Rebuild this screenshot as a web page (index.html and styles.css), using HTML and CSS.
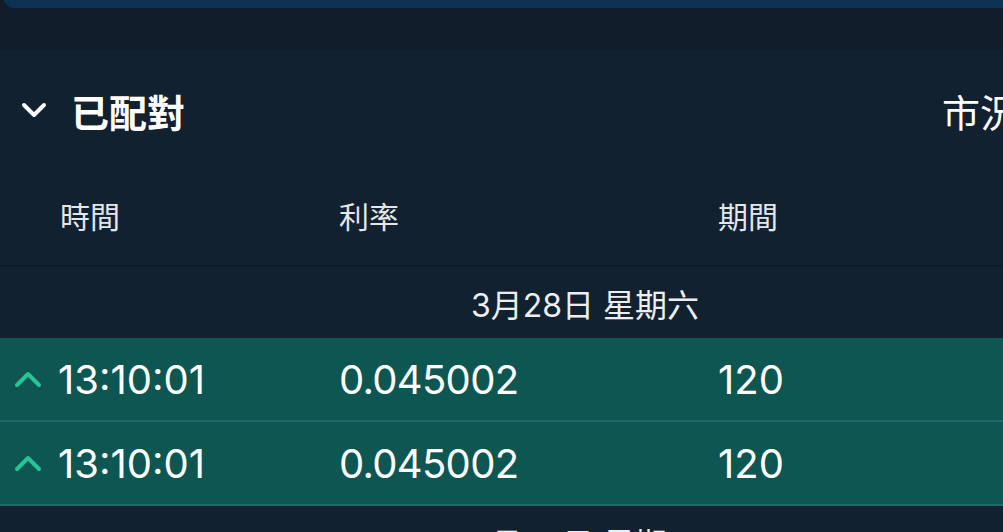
FILE: index.html
```html
<!DOCTYPE html>
<html lang="zh-Hant">
<head>
    <meta charset="UTF-8">
    <meta name="viewport" content="width=device-width, initial-scale=1.0">
    <title>已配對</title>
    <link rel="stylesheet" href="styles.css">
</head>
<body>
    <div class="page">
        <div class="top-card"></div>
        <div class="spacer"></div>
        <section class="matched">
            <header class="matched-head">
                <div class="title">
                    <svg class="chevron" width="26" height="18" viewBox="0 0 26 18">
                        <path d="M3 4 L13 14 L23 4" fill="none" stroke="#fff" stroke-width="4" stroke-linecap="round" stroke-linejoin="round"/>
                    </svg>
                    <h2>已配對</h2>
                </div>
                <div class="market">市況</div>
            </header>
            <div class="row col-head">
                <span></span>
                <span>時間</span>
                <span>利率</span>
                <span>期間</span>
            </div>
            <div class="date-row">3月28日 星期六</div>
            <div class="row trade">
                <span class="arrow">
                    <svg width="28" height="18" viewBox="0 0 28 18">
                        <path d="M3 15 L14 4 L25 15" fill="none" stroke="#27c494" stroke-width="4" stroke-linecap="round" stroke-linejoin="round"/>
                    </svg>
                </span>
                <span class="num">13:10:01</span>
                <span class="num rate">0.045002</span>
                <span class="num">120</span>
            </div>
            <div class="row trade">
                <span class="arrow">
                    <svg width="28" height="18" viewBox="0 0 28 18">
                        <path d="M3 15 L14 4 L25 15" fill="none" stroke="#27c494" stroke-width="4" stroke-linecap="round" stroke-linejoin="round"/>
                    </svg>
                </span>
                <span class="num">13:10:01</span>
                <span class="num rate">0.045002</span>
                <span class="num">120</span>
            </div>
            <div class="date-row">3月28日 星期五</div>
        </section>
    </div>
</body>
</html>
```

FILE: styles.css
```css
body {
    margin: 0;
    background: #111d2a;
    font-family: "Inter", "Noto Sans CJK TC", sans-serif;
    color: #fff;
    overflow: hidden;
}
.page {
    inline-size: 1170px;
}
.top-card {
    block-size: 24px;
    margin-block-start: -16px;
    margin-inline-start: 3px;
    border-radius: 16px;
    background: #0e3152;
}
.spacer {
    block-size: 42px;
}
.matched {
    background: #12212f;
}
.matched-head {
    display: flex;
    align-items: center;
    block-size: 120px;
}
.title {
    display: flex;
    align-items: center;
    gap: 24px;
    padding-inline-start: 21px;
}
.chevron {
    display: block;
}
h2 {
    margin: 0;
    font-family: "Noto Sans CJK TC", sans-serif;
    font-size: 38px;
    font-weight: 700;
}
.market {
    margin-inline-start: auto;
    inline-size: 228px;
    font-family: "Noto Sans CJK TC", sans-serif;
    font-size: 38px;
    font-weight: 400;
    white-space: nowrap;
}
.row {
    display: grid;
    grid-template-columns: 58px 281px 379px 1fr;
    align-items: center;
}
.col-head {
    block-size: 89px;
    padding-block-end: 6px;
    border-block-end: 2px solid #0e1a25;
    font-family: "Noto Sans CJK TC", sans-serif;
    font-size: 30px;
    color: #e3e7eb;
}
.col-head span:nth-child(2) {
    padding-inline-start: 2px;
}
.date-row {
    block-size: 71px;
    display: flex;
    align-items: center;
    justify-content: center;
    font-family: "Inter", "Noto Sans CJK TC", sans-serif;
    font-size: 32px;
    color: #eceef0;
}
.trade {
    block-size: 82px;
    background: #0e5651;
    border-block-end: 2px solid #1d6a6b;
}
.arrow {
    padding-inline-start: 14px;
    display: flex;
}
.num {
    font-size: 40px;
    font-weight: 400;
}
.rate {
    letter-spacing: -0.7px;
}
```
